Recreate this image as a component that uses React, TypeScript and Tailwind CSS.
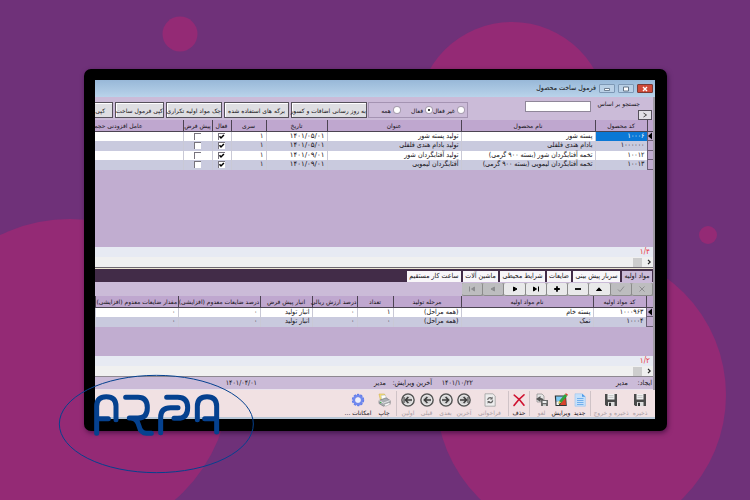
import { useState } from 'react'
import type { ReactNode } from 'react'

interface Column {
  title: string
  width: string
}

interface Product {
  code: string
  name: string
  title: string
  date: string
}

const PRODUCT_COLUMNS: Column[] = [
  { title: 'کد محصول', width: 'w-[52px]' },
  { title: 'نام محصول', width: 'w-[134px]' },
  { title: 'عنوان', width: 'w-[134px]' },
  { title: 'تاریخ', width: 'w-[61px]' },
  { title: 'سری', width: 'w-[35px]' },
  { title: 'فعال', width: 'w-[19px]' },
  { title: 'پیش فرض', width: 'w-[29px]' },
]

const PRODUCTS: Product[] = [
  { code: '۱۰۰۰۶', name: 'پسته شور', title: 'تولید پسته شور', date: '۱۴۰۱/۰۵/۰۱' },
  { code: '۱۰۰۰۰۰۰', name: 'بادام هندی فلفلی', title: 'تولید بادام هندی فلفلی', date: '۱۴۰۱/۰۵/۰۱' },
  { code: '۱۰۰۱۲', name: 'تخمه آفتابگردان شور (بسته ۹۰۰ گرمی)', title: 'تولید آفتابگردان شور', date: '۱۴۰۱/۰۹/۰۱' },
  { code: '۱۰۰۱۳', name: 'تخمه آفتابگردان لیمویی (بسته ۹۰۰ گرمی)', title: 'آفتابگردان لیمویی', date: '۱۴۰۱/۰۹/۰۱' },
]

const MATERIAL_COLUMNS: Column[] = [
  { title: 'کد مواد اولیه', width: 'w-[53px]' },
  { title: 'نام مواد اولیه', width: 'w-[132px]' },
  { title: 'مرحله تولید', width: 'w-[68px]' },
  { title: 'تعداد', width: 'w-[36px]' },
  { title: 'درصد ارزش ریالی', width: 'w-[45px]' },
  { title: 'انبار پیش فرض', width: 'w-[52px]' },
  { title: 'درصد ضایعات معدوم (افزایشی)', width: 'w-[82px]' },
  { title: 'مقدار ضایعات معدوم (افزایشی)', width: 'w-auto' },
]

const MATERIALS = [
  ['۱۰۰۰۹۶۳', 'پسته خام', '(همه مراحل)', '۱', '۰', 'انبار تولید', '۰', '۰'],
  ['۱۰۰۰۴', 'نمک', '(همه مراحل)', '۰', '۰', 'انبار تولید', '۰', '۰'],
]

const TABS = [
  { title: 'مواد اولیه', width: 'w-[30px]' },
  { title: 'سربار پیش بینی', width: 'w-[47px]' },
  { title: 'ضایعات', width: 'w-[24px]' },
  { title: 'شرایط محیطی', width: 'w-[45px]' },
  { title: 'ماشین آلات', width: 'w-[35px]' },
  { title: 'ساعت کار مستقیم', width: 'w-[54px]' },
]

// Tight labels use the regular face one size down
const SMALL = "font-['DejaVu_Sans',sans-serif] text-[6px]"
const TH = `${SMALL} h-[11px] border-l border-b border-[#4c4452] p-0 text-center font-normal whitespace-nowrap`
const TD = 'border-l border-[#c9c9d6] px-[2px] py-0 text-right whitespace-nowrap'
const ROW = 'bg-white odd:h-[9px] even:h-[10px] even:bg-[#c9cade]'

function Background() {
  return (
    <svg
      className="absolute inset-0 h-full w-full"
      viewBox="0 0 750 500"
      preserveAspectRatio="xMidYMid slice"
      aria-hidden="true"
    >
      <g fill="#942a75">
        <circle cx="180" cy="34" r="17.5" />
        <circle cx="512" cy="117" r="95" />
        <circle cx="708" cy="235" r="9" />
        <circle cx="70" cy="379" r="160" />
        <circle cx="581" cy="395" r="145" />
      </g>
    </svg>
  )
}

function Logo() {
  return (
    <svg
      className="pointer-events-none absolute -bottom-[54px] -left-[34px] h-[140px] w-[210px]"
      viewBox="0 0 630 420"
      fill="none"
      stroke="#05418f"
      role="img"
      aria-label="ARPA"
    >
      <ellipse cx="319" cy="237" rx="291" ry="146" strokeWidth="3" />
      <g strokeWidth="15" strokeLinecap="round" strokeLinejoin="round">
        <path d="M140 265V184Q140 155 169 155Q198 155 198 184V224M140 221H175" />
        <path d="M227 157H264Q292 157 292 188Q292 219 264 219H238M246 220Q262 222 267 243Q272 265 290 265H304" />
        <path d="M350 157H383Q413 157 413 188Q413 220 383 220H372M384 188H362Q332 188 332 217V263" />
        <path d="M442 224V184Q442 155 471 155Q500 155 500 184V261M464 221H500" />
      </g>
    </svg>
  )
}

function Check({ checked, label }: { checked: boolean; label: string }) {
  return (
    <span className="relative mx-auto block size-[7px]">
      <input
        type="checkbox"
        defaultChecked={checked}
        aria-label={label}
        className="peer block size-[7px] appearance-none border-t border-l border-[#77737c] bg-white"
      />
      <svg viewBox="0 0 7 7" className="pointer-events-none absolute inset-0 hidden size-[7px] peer-checked:block">
        <path d="M1.5 3.2 3 4.9 5.9 1.9" fill="none" stroke="#000" strokeWidth="1.5" />
      </svg>
    </span>
  )
}

function HeadCells({ columns }: { columns: Column[] }) {
  return (
    <>
      {columns.map(c => (
        <th key={c.title} className={`${TH} ${c.width}`}>{c.title}</th>
      ))}
    </>
  )
}

function RowMarker({ active }: { active: boolean }) {
  return (
    <td className="border-b border-l border-[#6b5f75] bg-[#c1add0] p-0">
      {active && (
        <svg viewBox="0 0 6 8" className="block h-[8px] w-[6px]">
          <path d="M5 0.5V7.5L1 4Z" fill="#000" />
        </svg>
      )}
    </td>
  )
}

// Record counter and the horizontal scroll bar below it
function GridFooter({ count }: { count: string }) {
  return (
    <>
      <div className="h-[10px] bg-[#e7eaf3] px-[3px] text-[8px] leading-[10px] text-[#e8323c]">{count}</div>
      <div className="flex h-[10px] items-center gap-[2px] bg-[#f0f0f0]">
        <button aria-label="پیمایش به راست" className="flex h-full w-[9px] items-center justify-center">
          <svg viewBox="0 0 6 6" className="size-[6px]">
            <path d="M2 0.8 4.2 3 2 5.2" fill="none" stroke="#222" strokeWidth="1.2" />
          </svg>
        </button>
        <span className="h-[9px] w-[9px] bg-[#cdcdcd]" />
      </div>
    </>
  )
}

const NAV_ICONS: { label: string; enabled: boolean; icon: ReactNode }[] = [
  { label: 'انصراف', enabled: false, icon: <path d="M3.5 1.5 8.5 6.5M8.5 1.5 3.5 6.5" /> },
  { label: 'تایید', enabled: false, icon: <path d="M3 4.5 5 6.5 9 1.5" /> },
  { label: 'اصلاح', enabled: true, icon: <path d="M3.5 5.5 6 2.8 8.5 5.5Z" fill="currentColor" /> },
  { label: 'کاهش', enabled: true, icon: <path d="M3 4H9" strokeWidth="1.8" /> },
  { label: 'افزایش', enabled: true, icon: <path d="M3.2 4H8.8M6 1.2V6.8" strokeWidth="1.8" /> },
  { label: 'انتها', enabled: true, icon: <path d="M3.5 2V6L6.5 4ZM8.5 1.5V6.5" fill="currentColor" /> },
  { label: 'بعد', enabled: true, icon: <path d="M4.5 2V6L8 4Z" fill="currentColor" /> },
  { label: 'قبل', enabled: false, icon: <path d="M7.5 2V6L4 4Z" fill="currentColor" /> },
  { label: 'ابتدا', enabled: false, icon: <path d="M8.5 2V6L5.5 4ZM3.5 1.5V6.5" fill="currentColor" /> },
]

function Floppy() {
  return (
    <svg viewBox="0 0 14 14" className="size-[14px]">
      <path d="M1 1H13V13H2.2L1 11.8Z" fill="#4a4a4a" />
      <path d="M3.5 1H10.5V6.5H3.5Z" fill="#f1f1f1" />
      <path d="M4.5 2.6H9.5M4.5 4.4H9.5" stroke="#b5b5b5" strokeWidth="0.7" />
      <path d="M4 9H10.5V13H4Z" fill="#dedede" />
      <path d="M5 9.8H7V13H5Z" fill="#333" />
    </svg>
  )
}

function CircleArrow({ flip, bar }: { flip?: boolean; bar?: boolean }) {
  return (
    <svg viewBox="0 0 14 14" className="size-[14px]">
      <circle cx="7" cy="7" r="6.1" fill="#d4d4d4" stroke="#555" strokeWidth="1.5" />
      <circle cx="7" cy="7" r="4.8" fill="none" stroke="#f3f3f3" strokeWidth="0.7" />
      <g transform={flip ? 'translate(14 0) scale(-1 1)' : undefined} fill="none" stroke="#3c3c3c" strokeWidth="1.6">
        <path d="M3 7H9.3M6.6 4 9.6 7 6.6 10" />
        {bar && <path d="M11 4V10" strokeWidth="1.1" />}
      </g>
    </svg>
  )
}

function NewIcon() {
  return (
    <svg viewBox="0 0 14 14" className="size-[14px]">
      <path d="M2 0.8H9L12.4 3.8V13.2H2Z" fill="#c5e0fa" stroke="#9cc4ee" strokeWidth="0.6" />
      <path d="M9 0.8V3.8H12.4Z" fill="#4e9be8" />
      <path d="M4 5.5H10.5M4 7.5H10.5M4 9.5H10.5M4 11.5H10.5" stroke="#69a9ea" strokeWidth="0.9" />
    </svg>
  )
}

function EditIcon() {
  return (
    <svg viewBox="0 0 14 14" className="size-[14px]">
      <path d="M0.8 2.5H12L12.8 13H1.5Z" fill="#2d3436" />
      <path d="M2 3.6H10L6 8 2.4 8.5Z" fill="#7ec8f4" />
      <path d="M2.4 8.5 6 8 5 12H2.5Z" fill="#f4f4f4" />
      <path d="M8.5 7 11.5 4.5 12 12H6Z" fill="#d8432c" />
      <path d="M4.5 10.8 5.2 8 11 1 13.3 2.8 7.3 9.8Z" fill="#2fa43c" />
      <path d="M11 1 12 0.2 14 1.8 13.3 2.8Z" fill="#d63c2a" />
      <path d="M4.5 10.8 5.2 8 7.3 9.8Z" fill="#f0c34a" />
    </svg>
  )
}

function CancelIcon() {
  return (
    <svg viewBox="0 0 14 14" className="size-[14px]">
      <path d="M2 1H7L9 3V9H2Z" fill="#e6e6e6" stroke="#8a8a8a" strokeWidth="0.7" />
      <path d="M1 6 5.5 3V5Q9 5 9 9 7.5 7 5.5 7.2V9Z" fill="#555" />
      <path d="M6 7H13V13H6Z" fill="#6a6a6a" />
      <path d="M7.6 8H11.5V10H7.6Z" fill="#eee" />
      <path d="M8 11.2H11V13H8Z" fill="#ccc" />
    </svg>
  )
}

function DeleteIcon() {
  return (
    <svg viewBox="0 0 14 14" className="size-[14px]">
      <path d="M2.2 2.2Q7 5.5 12 12.2M12 1.8Q6.5 6 2 12.5" fill="none" stroke="#cf1230" strokeWidth="1.6" strokeLinecap="round" />
    </svg>
  )
}

function RefreshIcon() {
  return (
    <svg viewBox="0 0 14 14" className="size-[14px]">
      <path d="M2 0.8H9.9L12.2 3V13.2H2Z" fill="#ededed" stroke="#a0a0a0" strokeWidth="0.8" />
      <path d="M4.6 6.8Q5 4.5 7.2 4.6L9 5.4M9.7 7.4Q9.4 9.8 7 9.7L5.2 8.9" fill="none" stroke="#666" strokeWidth="1.2" />
      <path d="M9.6 3.6V6.4H7ZM4.6 10.8V8H7.2Z" fill="#666" />
    </svg>
  )
}

function PrintIcon() {
  return (
    <svg viewBox="0 0 14 14" className="size-[14px]">
      <path d="M2 1H7.5L9.5 6 3.5 7.5Z" fill="#f7e07a" stroke="#c9a93c" strokeWidth="0.5" />
      <path d="M4 2.5 8 2 10.5 6 5 7.5Z" fill="#fff" stroke="#9ab" strokeWidth="0.4" />
      <path d="M2 7.5 9 4.8 13.2 7.5V10.5L6.5 13.2 2 10.5Z" fill="#a9adb2" stroke="#6c7075" strokeWidth="0.6" />
      <path d="M2 7.5 6.5 10 13.2 7.5" fill="none" stroke="#f3f3f3" strokeWidth="0.8" />
      <path d="M7 11.5 12 9.7 13.5 11 8.5 13.2Z" fill="#fff" stroke="#888" strokeWidth="0.4" />
      <circle cx="3.6" cy="9.5" r="0.8" fill="#3fae4c" />
    </svg>
  )
}

function GearIcon() {
  return (
    <svg viewBox="0 0 14 14" className="size-[14px]">
      <circle cx="7" cy="7" r="5" fill="none" stroke="#5f7bea" strokeWidth="2.4" strokeDasharray="2.2 0.94" />
      <circle cx="7" cy="7" r="4" fill="none" stroke="#7089ee" strokeWidth="2.6" />
      <circle cx="7" cy="7" r="2.6" fill="#eceffd" />
    </svg>
  )
}

interface Action {
  label: string
  width: string
  icon: ReactNode
  off?: boolean
}

const ACTION_GROUPS: Action[][] = [
  [
    { label: 'ذخیره', width: 'w-[22px]', icon: <Floppy />, off: true },
    { label: 'ذخیره و خروج', width: 'w-[36px]', icon: <Floppy />, off: true },
  ],
  [
    { label: 'جدید', width: 'w-[17px]', icon: <NewIcon /> },
    { label: 'ویرایش', width: 'w-[20px]', icon: <EditIcon /> },
    { label: 'لغو', width: 'w-[19px]', icon: <CancelIcon />, off: true },
  ],
  [{ label: 'حذف', width: 'w-[16px]', icon: <DeleteIcon /> }],
  [
    { label: 'فراخوانی', width: 'w-[33px]', icon: <RefreshIcon />, off: true },
    { label: 'آخرین', width: 'w-[18px]', icon: <CircleArrow bar />, off: true },
    { label: 'بعدی', width: 'w-[19px]', icon: <CircleArrow />, off: true },
    { label: 'قبلی', width: 'w-[19px]', icon: <CircleArrow flip />, off: true },
    { label: 'اولین', width: 'w-[18px]', icon: <CircleArrow flip bar />, off: true },
  ],
  [
    { label: 'چاپ', width: 'w-[20px]', icon: <PrintIcon /> },
    { label: 'امکانات ...', width: 'w-[32px]', icon: <GearIcon /> },
  ],
]

function TitleBar() {
  const btn = 'flex h-[9px] w-[16px] items-center justify-center rounded-[1px] border border-[#7d98b5] bg-[#b9d0e6]'
  return (
    <header className="flex h-[17px] items-center gap-[3px] bg-linear-to-b from-[#98b8d8] to-[#b9d3ea] px-[2px]">
      <button aria-label="بستن" className="flex h-[9px] w-[16px] items-center justify-center rounded-[1px] border border-[#7a3a35] bg-[#cf4a38]">
        <svg viewBox="0 0 6 6" className="size-[6px]">
          <path d="M1 1 5 5M5 1 1 5" stroke="#fff" strokeWidth="1.4" />
        </svg>
      </button>
      <button aria-label="بزرگ‌نمایی" className={btn}>
        <svg viewBox="0 0 8 6" className="h-[6px] w-[8px]">
          <path d="M1.5 1H6.5V5H1.5Z" fill="#fff" stroke="#55677a" strokeWidth="0.9" />
        </svg>
      </button>
      <button aria-label="کوچک‌نمایی" className={btn}>
        <svg viewBox="0 0 8 6" className="h-[6px] w-[8px]">
          <path d="M1.5 2.5H6.5V4.5H1.5Z" fill="#fff" stroke="#55677a" strokeWidth="0.8" />
        </svg>
      </button>
      <h1 className="whitespace-nowrap text-[#111]">فرمول ساخت محصول</h1>
    </header>
  )
}

function FilterBar() {
  const [filter, setFilter] = useState('active')
  const options = [
    { id: 'inactive', label: 'غیر فعال', width: 'w-[32px]' },
    { id: 'active', label: 'فعال', width: 'w-[32px]' },
    { id: 'all', label: 'همه', width: 'w-[24px]' },
  ]
  const btn = 'h-[16px] shrink-0 border border-[#55505a] bg-[#dedee2] text-center whitespace-nowrap shadow-[inset_1px_1px_0_#fff]'

  return (
    <div className={`${SMALL} flex h-[23px] overflow-hidden bg-[#cbbbd8]`}>
      <div className="w-[62px] shrink-0">
        <label htmlFor="search" className="block h-[13px] pr-[13px] leading-[14px] whitespace-nowrap">جستجو بر اساس</label>
        <button aria-label="جستجو" className="mr-[1px] flex h-[10px] w-[14px] items-center justify-center border border-[#55505a] bg-[#e2e0e6]">
          <svg viewBox="0 0 6 6" className="size-[6px]">
            <path d="M1.5 1 4.5 3 1.5 5" fill="none" stroke="#333" strokeWidth="0.9" />
          </svg>
        </button>
      </div>
      <input id="search" className="mt-[4px] h-[11px] w-[66px] shrink-0 border border-[#8f8799] bg-white px-[2px]" />
      <div role="radiogroup" aria-label="وضعیت" className="mt-[5px] mr-[57px] flex h-[16px] w-[100px] shrink-0 items-center border border-[#a493b2] pr-[3px]">
        {options.map(o => (
          <label key={o.id} className={`flex shrink-0 items-center gap-[3px] whitespace-nowrap ${o.width}`}>
            <input
              type="radio"
              name="filter"
              checked={filter === o.id}
              onChange={() => setFilter(o.id)}
              className="size-[6px] shrink-0 appearance-none rounded-full border-white bg-white shadow-[0_0_0_1px_#a89fb0] checked:border-2 checked:bg-black"
            />
            {o.label}
          </label>
        ))}
      </div>
      <div className="mt-[5px] mr-[1px] flex gap-[2px]">
        <button className={`${btn} w-[76px]`}>به روز رسانی اضافات و کسور</button>
        <button className={`${btn} w-[65px]`}>برگه های استفاده شده</button>
        <button className={`${btn} w-[56px]`}>چک مواد اولیه تکراری</button>
        <button className={`${btn} w-[49px]`}>کپی فرمول ساخت</button>
        <button className={`${btn} w-[50px] pr-[7px] text-right`}>کپی</button>
      </div>
    </div>
  )
}

function ProductTable() {
  return (
    <table className="w-full table-fixed border-collapse">
      <thead>
        <tr className="bg-[#bfa7cf]">
          <th className={`${TH} w-[6px]`} aria-label="ردیف جاری" />
          <HeadCells columns={PRODUCT_COLUMNS} />
          <th className={`${SMALL} overflow-hidden border-b border-[#4c4452] p-0 pr-[40px] text-right font-normal whitespace-nowrap`}>عامل افزودنی حجمی</th>
        </tr>
      </thead>
      <tbody>
        {PRODUCTS.map((p, i) => (
          <tr key={p.code} className={ROW}>
            <RowMarker active={i === 0} />
            <td className={i === 0 ? `${TD} bg-[#0a78d6] text-white` : TD}>{p.code}</td>
            <td className={TD}>{p.name}</td>
            <td className={TD}>{p.title}</td>
            <td className={`${TD} font-['DejaVu_Sans',sans-serif]`}>{p.date}</td>
            <td className={TD}>۱</td>
            <td className={TD}><Check checked label="فعال" /></td>
            <td className={TD}><Check checked={false} label="پیش فرض" /></td>
            <td className="p-0" />
          </tr>
        ))}
      </tbody>
    </table>
  )
}

function MaterialTable() {
  return (
    <table className="w-full table-fixed border-collapse">
      <thead>
        <tr className="bg-[#bfa7cf]">
          <th className={`${TH} w-[7px]`} aria-label="ردیف جاری" />
          <HeadCells columns={MATERIAL_COLUMNS} />
        </tr>
      </thead>
      <tbody>
        {MATERIALS.map((row, i) => (
          <tr key={row[0]} className={ROW}>
            <RowMarker active={i === 0} />
            {row.map((cell, j) => (
              <td key={j} className={TD}>{cell}</td>
            ))}
          </tr>
        ))}
      </tbody>
    </table>
  )
}

export default function App() {
  const [tab, setTab] = useState(0)

  return (
    <main
      dir="rtl"
      className="relative min-h-screen overflow-hidden bg-[#6f3179] pt-[69px] pr-[83px] pb-[69px] pl-[84px] font-['DejaVu_Sans_Condensed','DejaVu_Sans',sans-serif] text-[7px] leading-[9px] text-[#131015]"
    >
      <Background />
      <div className="relative">
        <div className="overflow-hidden rounded-[7px] border-t-[11px] border-r-[12px] border-b-[12px] border-l-[11px] border-black bg-black shadow-[1px_2px_5px_rgba(30,0,40,0.55)]">
          <TitleBar />
          <div className="border-r-2 border-[#a09aa4] bg-[#c1add0]">
            <FilterBar />
            <section className="min-h-[127px]">
              <ProductTable />
            </section>
            <GridFooter count="۱/۴" />

            <div className="h-[3px] border-t border-b border-t-[#6d6870] border-b-[#422c48] bg-[#ece6d2]" />

            <div role="tablist" className="flex h-[12px] items-end gap-[2px] bg-[#422c48] pr-[1px]">
              {TABS.map((t, i) => (
                <button
                  key={t.title}
                  role="tab"
                  aria-selected={tab === i}
                  onClick={() => setTab(i)}
                  className={`h-[11px] shrink-0 text-center whitespace-nowrap ${t.width} ${tab === i ? 'bg-[#cbbbd8]' : 'bg-[#f8f6f9]'}`}
                >
                  {t.title}
                </button>
              ))}
            </div>

            <div className="flex h-[14px] items-center bg-[#cbbbd8]">
              <div className="flex h-[13px] w-[191px] bg-[#a9a9a9]">
                {NAV_ICONS.map(n => (
                  <button
                    key={n.label}
                    aria-label={n.label}
                    disabled={!n.enabled}
                    className="flex flex-1 items-center justify-center rounded-[2px] border-r border-b border-[#8b8b8b] bg-[#e9e9ea] text-black disabled:bg-[#bdbdbf] disabled:text-[#8d8d90]"
                  >
                    <svg viewBox="0 0 12 8" className="h-[8px] w-[12px]" fill="none" stroke="currentColor" strokeWidth="1">
                      {n.icon}
                    </svg>
                  </button>
                ))}
              </div>
            </div>

            <section className="min-h-[60px]">
              <MaterialTable />
            </section>
            <GridFooter count="۱/۲" />

            <div className="flex h-[14px] items-center border-t border-b border-t-[#8d8790] border-b-[#e9e2ec] bg-[#cbbbd8] whitespace-nowrap">
              <span className="w-[25px] pr-[1px]">ایجاد:</span>
              <span className="w-[155px]">مدیر</span>
              <span className="w-[41px]">۱۴۰۱/۱۰/۲۲</span>
              <span className="w-[46px]">آخرین ویرایش:</span>
              <span className="w-[129px]">مدیر</span>
              <span>۱۴۰۱/۰۴/۰۱</span>
            </div>
          </div>

          <div className={`${SMALL} flex h-[29px] border-b-2 border-[#b7c6d6] bg-[#f1e1e3] pt-[1px] pr-[4px]`}>
            {ACTION_GROUPS.map((group, gi) => (
              <div key={gi} className="flex">
                {gi > 0 && <span className="mx-[2px] h-[25px] w-px bg-[#cfc3c7]" />}
                {group.map(a => (
                  <button
                    key={a.label}
                    disabled={a.off}
                    className={`flex flex-col items-center gap-[1px] pt-[2px] whitespace-nowrap disabled:text-[#a89da3] ${a.width}`}
                  >
                    {a.icon}
                    <span>{a.label}</span>
                  </button>
                ))}
              </div>
            ))}
          </div>
        </div>
        <Logo />
      </div>
    </main>
  )
}
